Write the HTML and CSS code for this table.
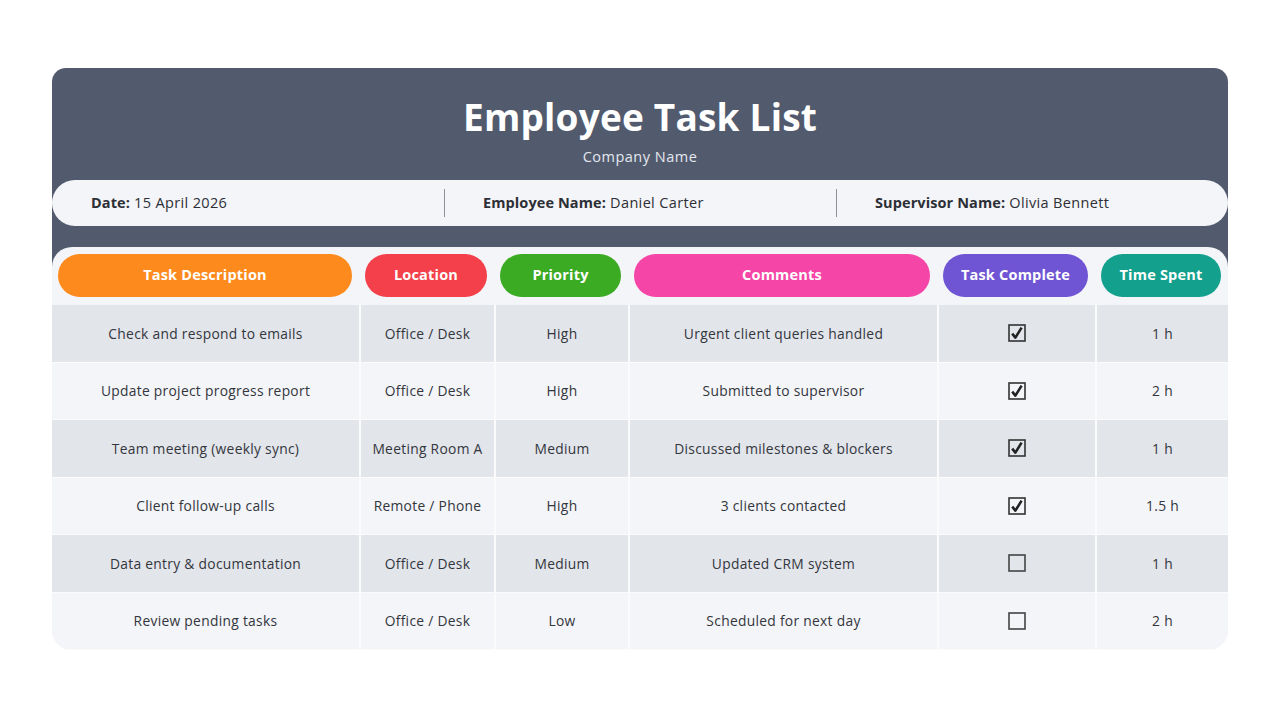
FILE: index.html
```html
<!DOCTYPE html>
<html>
<head>
<meta charset="utf-8">
<link rel="stylesheet" href="styles.css">
</head>
<body>
<div class="sheet">
  <header class="head">
    <h1 class="title">Employee Task List</h1>
    <p class="company">Company Name</p>
  </header>
  <div class="info">
    <div class="info-item"><b>Date:</b> 15 April 2026</div>
    <div class="info-item sep"><b>Employee Name:</b>&nbsp;Daniel Carter</div>
    <div class="info-item sep"><b>Supervisor Name:</b>&nbsp;Olivia Bennett</div>
  </div>
  <div class="card">
    <div class="grid">
      <div class="hcell"><span class="pill orange">Task Description</span></div>
      <div class="hcell"><span class="pill red">Location</span></div>
      <div class="hcell"><span class="pill green">Priority</span></div>
      <div class="hcell"><span class="pill pink">Comments</span></div>
      <div class="hcell"><span class="pill purple">Task Complete</span></div>
      <div class="hcell"><span class="pill teal">Time Spent</span></div>

      <div class="cell dark">Check and respond to emails</div>
      <div class="cell dark">Office / Desk</div>
      <div class="cell dark">High</div>
      <div class="cell dark">Urgent client queries handled</div>
      <div class="cell dark"><svg class="box" viewBox="0 0 18 18"><rect x="1" y="1" width="16" height="16" fill="none" stroke="#333" stroke-width="1.6"/><path d="M4.2 9.6 L7.4 13.6 L13.6 3.6" fill="none" stroke="#222" stroke-width="2.6" stroke-linejoin="round"/></svg></div>
      <div class="cell dark">1 h</div>

      <div class="cell">Update project progress report</div>
      <div class="cell">Office / Desk</div>
      <div class="cell">High</div>
      <div class="cell">Submitted to supervisor</div>
      <div class="cell"><svg class="box" viewBox="0 0 18 18"><rect x="1" y="1" width="16" height="16" fill="none" stroke="#333" stroke-width="1.6"/><path d="M4.2 9.6 L7.4 13.6 L13.6 3.6" fill="none" stroke="#222" stroke-width="2.6" stroke-linejoin="round"/></svg></div>
      <div class="cell">2 h</div>

      <div class="cell dark">Team meeting (weekly sync)</div>
      <div class="cell dark">Meeting Room A</div>
      <div class="cell dark">Medium</div>
      <div class="cell dark">Discussed milestones &amp; blockers</div>
      <div class="cell dark"><svg class="box" viewBox="0 0 18 18"><rect x="1" y="1" width="16" height="16" fill="none" stroke="#333" stroke-width="1.6"/><path d="M4.2 9.6 L7.4 13.6 L13.6 3.6" fill="none" stroke="#222" stroke-width="2.6" stroke-linejoin="round"/></svg></div>
      <div class="cell dark">1 h</div>

      <div class="cell">Client follow-up calls</div>
      <div class="cell">Remote / Phone</div>
      <div class="cell">High</div>
      <div class="cell">3 clients contacted</div>
      <div class="cell"><svg class="box" viewBox="0 0 18 18"><rect x="1" y="1" width="16" height="16" fill="none" stroke="#333" stroke-width="1.6"/><path d="M4.2 9.6 L7.4 13.6 L13.6 3.6" fill="none" stroke="#222" stroke-width="2.6" stroke-linejoin="round"/></svg></div>
      <div class="cell">1.5 h</div>

      <div class="cell dark">Data entry &amp; documentation</div>
      <div class="cell dark">Office / Desk</div>
      <div class="cell dark">Medium</div>
      <div class="cell dark">Updated CRM system</div>
      <div class="cell dark"><svg class="box" viewBox="0 0 18 18"><rect x="1" y="1" width="16" height="16" fill="none" stroke="#444" stroke-width="1.6"/></svg></div>
      <div class="cell dark">1 h</div>

      <div class="cell">Review pending tasks</div>
      <div class="cell">Office / Desk</div>
      <div class="cell">Low</div>
      <div class="cell">Scheduled for next day</div>
      <div class="cell"><svg class="box" viewBox="0 0 18 18"><rect x="1" y="1" width="16" height="16" fill="none" stroke="#444" stroke-width="1.6"/></svg></div>
      <div class="cell">2 h</div>
    </div>
  </div>
</div>
</body>
</html>
```
FILE: styles.css
```css
* { box-sizing: border-box; }
html, body { margin: 0; padding: 0; background: #ffffff; }
body {
  font-family: "Open Sans", "Noto Sans", sans-serif;
  color: #333640;
}
.sheet {
  margin: 68px 52px 0 52px;
  width: 1176px;
  border-radius: 14px;
  background: linear-gradient(#525b6e, #525b6e) top left / 100% 215px no-repeat;
}
.head {
  height: 112px;
  padding-top: 24px;
  text-align: center;
}
.title {
  margin: 0;
  font-size: 37px;
  line-height: 50px;
  font-weight: 700;
  color: #ffffff;
  letter-spacing: 0.2px;
}
.company {
  margin: 6px 0 0 0;
  font-size: 14.5px;
  line-height: 18px;
  color: #e4e7ee;
  letter-spacing: 0.5px;
}
.info {
  height: 46px;
  border-radius: 23px;
  background: #f4f5f8;
  display: grid;
  grid-template-columns: 392px 392px 392px;
  align-items: center;
}
.info-item {
  padding-left: 39px;
  font-size: 14.5px;
  color: #2c2f36;
  height: 28px;
  line-height: 28px;
  letter-spacing: 0.35px;
}
.info-item b { font-weight: 700; letter-spacing: 0.1px; }
.info-item.sep { border-left: 1px solid #8c9099; padding-left: 38px; }
.card {
  margin-top: 21px;
  background: #f4f5f8;
  border-radius: 20px;
  overflow: hidden;
}
.grid {
  display: grid;
  grid-template-columns: 307px 135px 134px 309px 158px 133px;
  grid-template-rows: 58px repeat(6, 57.5px);
}
.hcell {
  padding: 7px 7px 8px 6px;
  display: flex;
}
.pill {
  flex: 1;
  border-radius: 22px;
  display: flex;
  align-items: center;
  justify-content: center;
  padding-bottom: 3px;
  color: #ffffff;
  font-weight: 700;
  font-size: 14.5px;
  letter-spacing: 0.2px;
}
.orange { background: #fd8a1c; }
.red { background: #f3404a; }
.green { background: #3cab24; }
.pink { background: #f545a6; }
.purple { background: #6f54d3; }
.teal { background: #13a08d; }
.cell {
  display: flex;
  align-items: center;
  justify-content: center;
  font-size: 13.8px;
  letter-spacing: 0.3px;
  color: #33363d;
  background: #f4f5f8;
  border-left: 2px solid #fbfbfc;
  border-bottom: 1px solid #fbfbfc;
}
.cell:nth-child(6n+1) { border-left: none; }
.cell.dark { background: #e2e5ea; }
.box { width: 18px; height: 18px; }
```
